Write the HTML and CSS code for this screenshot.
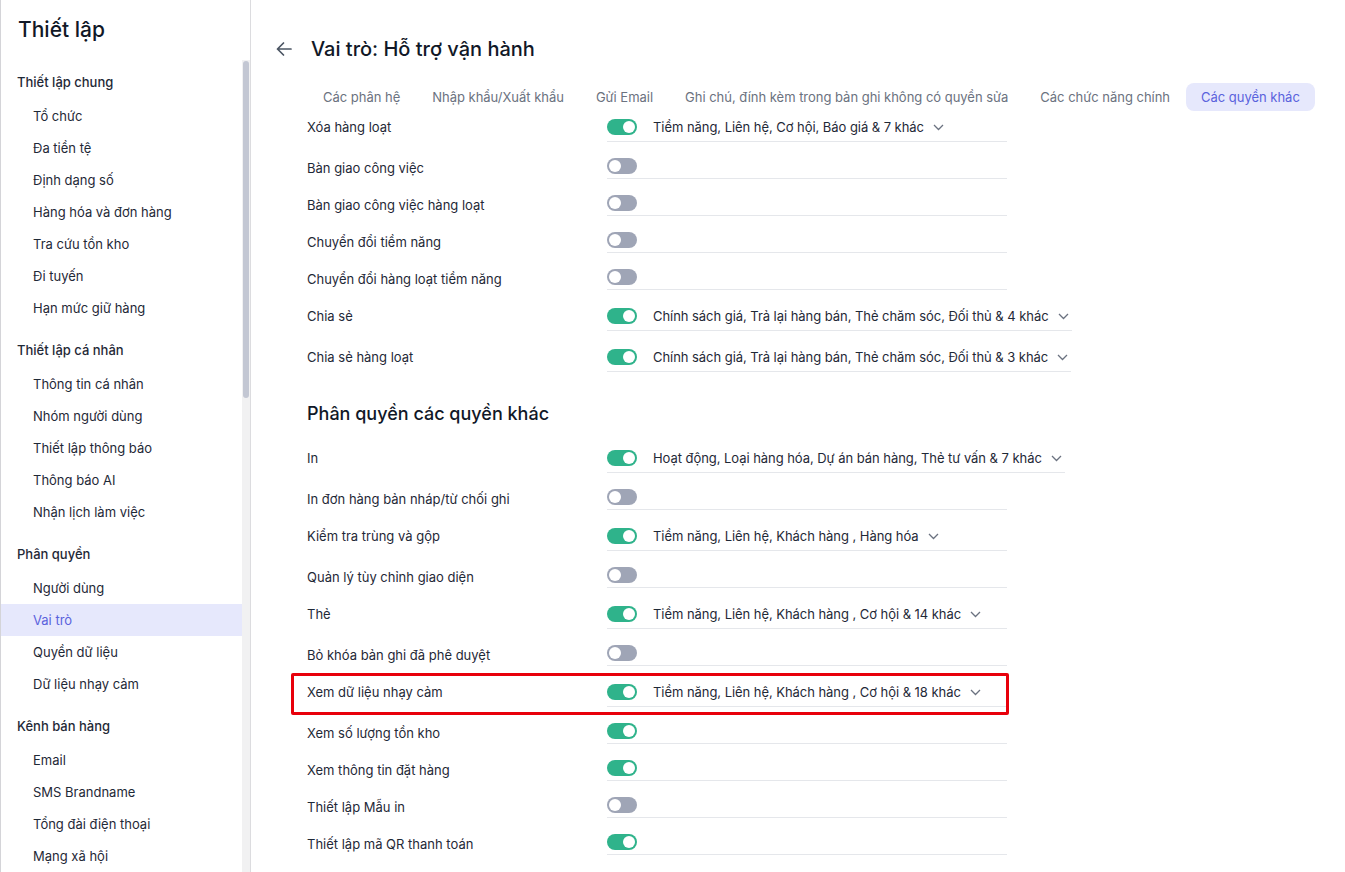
FILE: index.html
```html
<!DOCTYPE html>
<html lang="vi">
<head>
<meta charset="UTF-8" />
<meta name="viewport" content="width=device-width, initial-scale=1" />
<title>Thiết lập - Vai trò</title>
<link rel="stylesheet" href="styles.css">
</head>
<body>
<aside class="sidebar">
  <h2 class="sidebar-title">Thiết lập</h2>
  <div class="sidebar-body">
    <nav class="sidebar-nav">
      <div class="nav-group">Thiết lập chung</div>
      <a class="nav-item">Tổ chức</a>
      <a class="nav-item">Đa tiền tệ</a>
      <a class="nav-item">Định dạng số</a>
      <a class="nav-item">Hàng hóa và đơn hàng</a>
      <a class="nav-item">Tra cứu tồn kho</a>
      <a class="nav-item">Đi tuyến</a>
      <a class="nav-item">Hạn mức giữ hàng</a>

      <div class="nav-group">Thiết lập cá nhân</div>
      <a class="nav-item">Thông tin cá nhân</a>
      <a class="nav-item">Nhóm người dùng</a>
      <a class="nav-item">Thiết lập thông báo</a>
      <a class="nav-item">Thông báo AI</a>
      <a class="nav-item">Nhận lịch làm việc</a>

      <div class="nav-group">Phân quyền</div>
      <a class="nav-item">Người dùng</a>
      <a class="nav-item active">Vai trò</a>
      <a class="nav-item">Quyền dữ liệu</a>
      <a class="nav-item">Dữ liệu nhạy cảm</a>

      <div class="nav-group">Kênh bán hàng</div>
      <a class="nav-item">Email</a>
      <a class="nav-item">SMS Brandname</a>
      <a class="nav-item">Tổng đài điện thoại</a>
      <a class="nav-item">Mạng xã hội</a>
    </nav>
    <div class="scroll-track"><div class="scroll-thumb"></div></div>
  </div>
</aside>

<main class="main">
  <header class="page-head">
    <svg class="back-icon" width="16" height="16" viewBox="0 0 16 16" fill="none">
      <path d="M15 8H1.5M7.5 2 1.5 8l6 6" stroke="#4b5563" stroke-width="1.7" stroke-linecap="round" stroke-linejoin="round"/>
    </svg>
    <h1 class="page-title">Vai trò: Hỗ trợ vận hành</h1>
  </header>

  <div class="content">
    <div class="tabs">
      <span class="tab">Các phân hệ</span>
      <span class="tab">Nhập khẩu/Xuất khẩu</span>
      <span class="tab">Gửi Email</span>
      <span class="tab">Ghi chú, đính kèm trong bản ghi không có quyền sửa</span>
      <span class="tab">Các chức năng chính</span>
      <span class="tab active">Các quyền khác</span>
    </div>

    <div class="perm-list">
      <div class="perm-row">
        <div class="perm-label">Xóa hàng loạt</div>
        <div class="perm-ctrl">
          <span class="toggle on"></span>
          <span class="perm-scope">Tiềm năng, Liên hệ, Cơ hội, Báo giá &amp; 7 khác</span>
          <svg class="chev" width="11" height="7" viewBox="0 0 11 7"><path d="M1 1l4.5 4.5L10 1" fill="none" stroke="#6b7280" stroke-width="1.3"/></svg>
        </div>
      </div>
      <div class="perm-row">
        <div class="perm-label">Bàn giao công việc</div>
        <div class="perm-ctrl"><span class="toggle"></span></div>
      </div>
      <div class="perm-row">
        <div class="perm-label">Bàn giao công việc hàng loạt</div>
        <div class="perm-ctrl"><span class="toggle"></span></div>
      </div>
      <div class="perm-row">
        <div class="perm-label">Chuyển đổi tiềm năng</div>
        <div class="perm-ctrl"><span class="toggle"></span></div>
      </div>
      <div class="perm-row">
        <div class="perm-label">Chuyển đổi hàng loạt tiềm năng</div>
        <div class="perm-ctrl"><span class="toggle"></span></div>
      </div>
      <div class="perm-row">
        <div class="perm-label">Chia sẻ</div>
        <div class="perm-ctrl">
          <span class="toggle on"></span>
          <span class="perm-scope">Chính sách giá, Trả lại hàng bán, Thẻ chăm sóc, Đối thủ &amp; 4 khác</span>
          <svg class="chev" width="11" height="7" viewBox="0 0 11 7"><path d="M1 1l4.5 4.5L10 1" fill="none" stroke="#6b7280" stroke-width="1.3"/></svg>
        </div>
      </div>
      <div class="perm-row">
        <div class="perm-label">Chia sẻ hàng loạt</div>
        <div class="perm-ctrl">
          <span class="toggle on"></span>
          <span class="perm-scope">Chính sách giá, Trả lại hàng bán, Thẻ chăm sóc, Đối thủ &amp; 3 khác</span>
          <svg class="chev" width="11" height="7" viewBox="0 0 11 7"><path d="M1 1l4.5 4.5L10 1" fill="none" stroke="#6b7280" stroke-width="1.3"/></svg>
        </div>
      </div>
    </div>

    <h3 class="section-title">Phân quyền các quyền khác</h3>

    <div class="perm-list">
      <div class="perm-row">
        <div class="perm-label">In</div>
        <div class="perm-ctrl">
          <span class="toggle on"></span>
          <span class="perm-scope">Hoạt động, Loại hàng hóa, Dự án bán hàng, Thẻ tư vấn &amp; 7 khác</span>
          <svg class="chev" width="11" height="7" viewBox="0 0 11 7"><path d="M1 1l4.5 4.5L10 1" fill="none" stroke="#6b7280" stroke-width="1.3"/></svg>
        </div>
      </div>
      <div class="perm-row">
        <div class="perm-label">In đơn hàng bản nháp/từ chối ghi</div>
        <div class="perm-ctrl"><span class="toggle"></span></div>
      </div>
      <div class="perm-row">
        <div class="perm-label">Kiểm tra trùng và gộp</div>
        <div class="perm-ctrl">
          <span class="toggle on"></span>
          <span class="perm-scope">Tiềm năng, Liên hệ, Khách hàng , Hàng hóa</span>
          <svg class="chev" width="11" height="7" viewBox="0 0 11 7"><path d="M1 1l4.5 4.5L10 1" fill="none" stroke="#6b7280" stroke-width="1.3"/></svg>
        </div>
      </div>
      <div class="perm-row">
        <div class="perm-label">Quản lý tùy chỉnh giao diện</div>
        <div class="perm-ctrl"><span class="toggle"></span></div>
      </div>
      <div class="perm-row">
        <div class="perm-label">Thẻ</div>
        <div class="perm-ctrl">
          <span class="toggle on"></span>
          <span class="perm-scope">Tiềm năng, Liên hệ, Khách hàng , Cơ hội &amp; 14 khác</span>
          <svg class="chev" width="11" height="7" viewBox="0 0 11 7"><path d="M1 1l4.5 4.5L10 1" fill="none" stroke="#6b7280" stroke-width="1.3"/></svg>
        </div>
      </div>
      <div class="perm-row">
        <div class="perm-label">Bỏ khóa bản ghi đã phê duyệt</div>
        <div class="perm-ctrl"><span class="toggle"></span></div>
      </div>
      <div class="perm-row marked">
        <div class="perm-label">Xem dữ liệu nhạy cảm</div>
        <div class="perm-ctrl">
          <span class="toggle on"></span>
          <span class="perm-scope">Tiềm năng, Liên hệ, Khách hàng , Cơ hội &amp; 18 khác</span>
          <svg class="chev" width="11" height="7" viewBox="0 0 11 7"><path d="M1 1l4.5 4.5L10 1" fill="none" stroke="#6b7280" stroke-width="1.3"/></svg>
        </div>
      </div>
      <div class="perm-row">
        <div class="perm-label">Xem số lượng tồn kho</div>
        <div class="perm-ctrl"><span class="toggle on"></span></div>
      </div>
      <div class="perm-row">
        <div class="perm-label">Xem thông tin đặt hàng</div>
        <div class="perm-ctrl"><span class="toggle on"></span></div>
      </div>
      <div class="perm-row">
        <div class="perm-label">Thiết lập Mẫu in</div>
        <div class="perm-ctrl"><span class="toggle"></span></div>
      </div>
      <div class="perm-row">
        <div class="perm-label">Thiết lập mã QR thanh toán</div>
        <div class="perm-ctrl"><span class="toggle on"></span></div>
      </div>
    </div>
  </div>
</main>
</body>
</html>
```

FILE: styles.css
```css
:root {
  --text: #1f2937;
  --muted: #6b7280;
  --line: #e5e7eb;
  --accent: #5a62dc;
  --accent-bg: #e6e8fc;
  --on: #2fb38b;
  --off: #9fa5b6;
}
html, body {
  margin: 0;
  padding: 0;
  height: 100%;
}
body {
  font-family: Inter, "Noto Sans", sans-serif;
  font-size: 13px;
  color: var(--text);
  background: #fff;
  display: flex;
  overflow: hidden;
}

/* sidebar */
.sidebar {
  width: 249px;
  flex: none;
  border-left: 1px solid #d4d4d8;
  border-right: 1px solid #dcdcdf;
  display: flex;
  flex-direction: column;
  height: 100vh;
}
.sidebar-title {
  margin: 0;
  height: 60px;
  box-sizing: border-box;
  padding: 15px 0 0 17px;
  font-size: 21px;
  line-height: 30px;
  font-weight: 500;
  color: #111827;
}
.sidebar-body {
  flex: 1;
  min-height: 0;
  display: flex;
}
.sidebar-nav {
  flex: 1;
  overflow: hidden;
  padding-top: 6px;
}
.scroll-track {
  width: 8px;
  flex: none;
  background: #f1f1f2;
}
.scroll-thumb {
  height: 337px;
  margin: 1px 1px 0;
  border-radius: 3px;
  background: #c3c7d3;
}
.nav-group {
  height: 32px;
  line-height: 32px;
  padding-left: 16px;
  margin: 10px 0 2px;
  font-weight: 500;
  color: #1f2937;
}
.nav-group:first-child {
  margin-top: 0;
}
.nav-item {
  display: block;
  height: 32px;
  line-height: 32px;
  padding-left: 32px;
  color: #1f2937;
  cursor: pointer;
}
.nav-item.active {
  background: var(--accent-bg);
  color: var(--accent);
}

/* main area */
.main {
  flex: 1;
  padding-left: 25px;
  overflow: hidden;
}
.page-head {
  display: flex;
  align-items: center;
  gap: 19px;
  padding-top: 35px;
  height: 28px;
}
.back-icon {
  flex: none;
}
.page-title {
  margin: 0;
  font-size: 20px;
  line-height: 28px;
  font-weight: 500;
  color: #111827;
}
.content {
  padding-left: 31px;
}
.tabs {
  display: flex;
  margin-top: 20px;
  position: relative;
  z-index: 1;
}
.tab {
  height: 28px;
  line-height: 28px;
  padding: 0 16px;
  border-radius: 8px;
  color: var(--muted);
  white-space: nowrap;
  letter-spacing: -0.02px;
  cursor: pointer;
}
.tab.active {
  background: var(--accent-bg);
  color: var(--accent);
  padding: 0 15px;
}

/* permission rows */
.perm-list {
  margin-top: -10px;
}
.section-title + .perm-list {
  margin-top: 0;
}
.perm-row {
  display: flex;
  align-items: flex-start;
  position: relative;
}
.perm-label {
  width: 300px;
  flex: none;
  padding-top: 16px;
  line-height: 20px;
}
.perm-ctrl {
  flex: none;
  display: flex;
  align-items: center;
  min-width: 397px;
  min-height: 16px;
  padding: 16px 3px 4px 0;
  border-bottom: 1px solid var(--line);
}
.perm-scope {
  margin-left: 16px;
  line-height: 20px;
  white-space: nowrap;
  letter-spacing: -0.05px;
}
.chev {
  margin-left: 9px;
  flex: none;
}
.toggle {
  width: 30px;
  height: 16px;
  border-radius: 8px;
  background: var(--off);
  position: relative;
  flex: none;
}
.toggle::after {
  content: "";
  position: absolute;
  top: 2px;
  left: 2px;
  width: 12px;
  height: 12px;
  border-radius: 50%;
  background: #fff;
}
.toggle.on {
  background: var(--on);
}
.toggle.on::after {
  left: 16px;
}
.section-title {
  margin: 29px 0 5px;
  font-size: 18px;
  line-height: 26px;
  font-weight: 500;
  color: #111827;
}

/* red outline drawn round a marked row */
.perm-row.marked::after {
  content: "";
  position: absolute;
  top: 7px;
  bottom: -8px;
  left: -16px;
  width: 712px;
  border: 3px solid #e8000b;
  border-radius: 2px;
  pointer-events: none;
}
```
